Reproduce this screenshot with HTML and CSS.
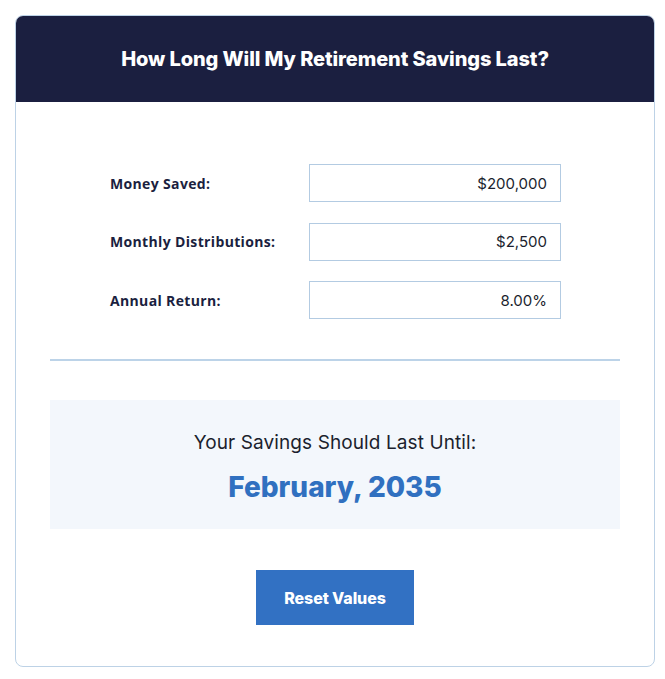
FILE: index.html
```html
<!DOCTYPE html>
<html>
<head>
<meta charset="utf-8">
<link rel="stylesheet" href="styles.css">
</head>
<body>
<div class="card">
  <div class="card-header">
    <h1 class="title">How Long Will My Retirement Savings Last?</h1>
  </div>
  <div class="card-body">
    <div class="form">
      <label class="label">Money Saved:</label>
      <div class="input">$200,000</div>
      <label class="label">Monthly Distributions:</label>
      <div class="input">$2,500</div>
      <label class="label">Annual Return:</label>
      <div class="input">8.00%</div>
    </div>
    <hr class="divider">
    <div class="result">
      <div class="result-label">Your Savings Should Last Until:</div>
      <div class="result-value">February, 2035</div>
    </div>
    <div class="actions">
      <button class="btn">Reset Values</button>
    </div>
  </div>
</div>
</body>
</html>
```
FILE: styles.css
```css
* { box-sizing: border-box; }
html, body { margin: 0; background: #fff; }
body {
  padding: 15px 10px 0 15px;
  font-family: Inter, "Open Sans", sans-serif;
}
.card {
  width: 640px;
  height: 652px;
  border: 1px solid #bdd2e6;
  border-radius: 8px;
  overflow: hidden;
}
.card-header {
  background: #1b1f40;
  height: 87px;
  margin: -1px -1px 0 -1px;
  display: flex;
  align-items: center;
  justify-content: center;
}
.title {
  margin: 0;
  color: #fff;
  font-size: 20px;
  font-weight: 800;
  letter-spacing: -0.1px;
}
.card-body {
  padding: 62px 34px 0 34px;
}
.form {
  display: grid;
  grid-template-columns: 199px 252px;
  row-gap: 20.5px;
  padding-left: 60px;
  align-items: center;
}
.label {
  font-family: "Open Sans", sans-serif;
  font-size: 14px;
  font-weight: 700;
  letter-spacing: 0.35px;
  color: #1b1f40;
}
.input {
  height: 38px;
  border: 1px solid #b3cbe2;
  display: flex;
  align-items: center;
  justify-content: flex-end;
  padding-right: 13px;
  font-size: 15px;
  color: #1b1f2e;
}
.divider {
  margin: 40px 0 0 0;
  border: 0;
  border-top: 2px solid #bcd3e8;
}
.result {
  margin-top: 39px;
  background: #f3f7fc;
  height: 129px;
  display: flex;
  flex-direction: column;
  align-items: center;
  padding-top: 31px;
}
.result-label {
  font-size: 19px;
  font-weight: 400;
  letter-spacing: 0.1px;
  color: #1b1f2e;
}
.result-value {
  margin-top: 16px;
  font-size: 28px;
  font-weight: 800;
  color: #3070c0;
}
.actions {
  display: flex;
  justify-content: center;
  margin-top: 41px;
}
.btn {
  width: 158px;
  height: 55px;
  border: 0;
  background: #3271c3;
  color: #fff;
  font-family: Inter, sans-serif;
  font-size: 16px;
  font-weight: 800;
  letter-spacing: -0.1px;
}
```
